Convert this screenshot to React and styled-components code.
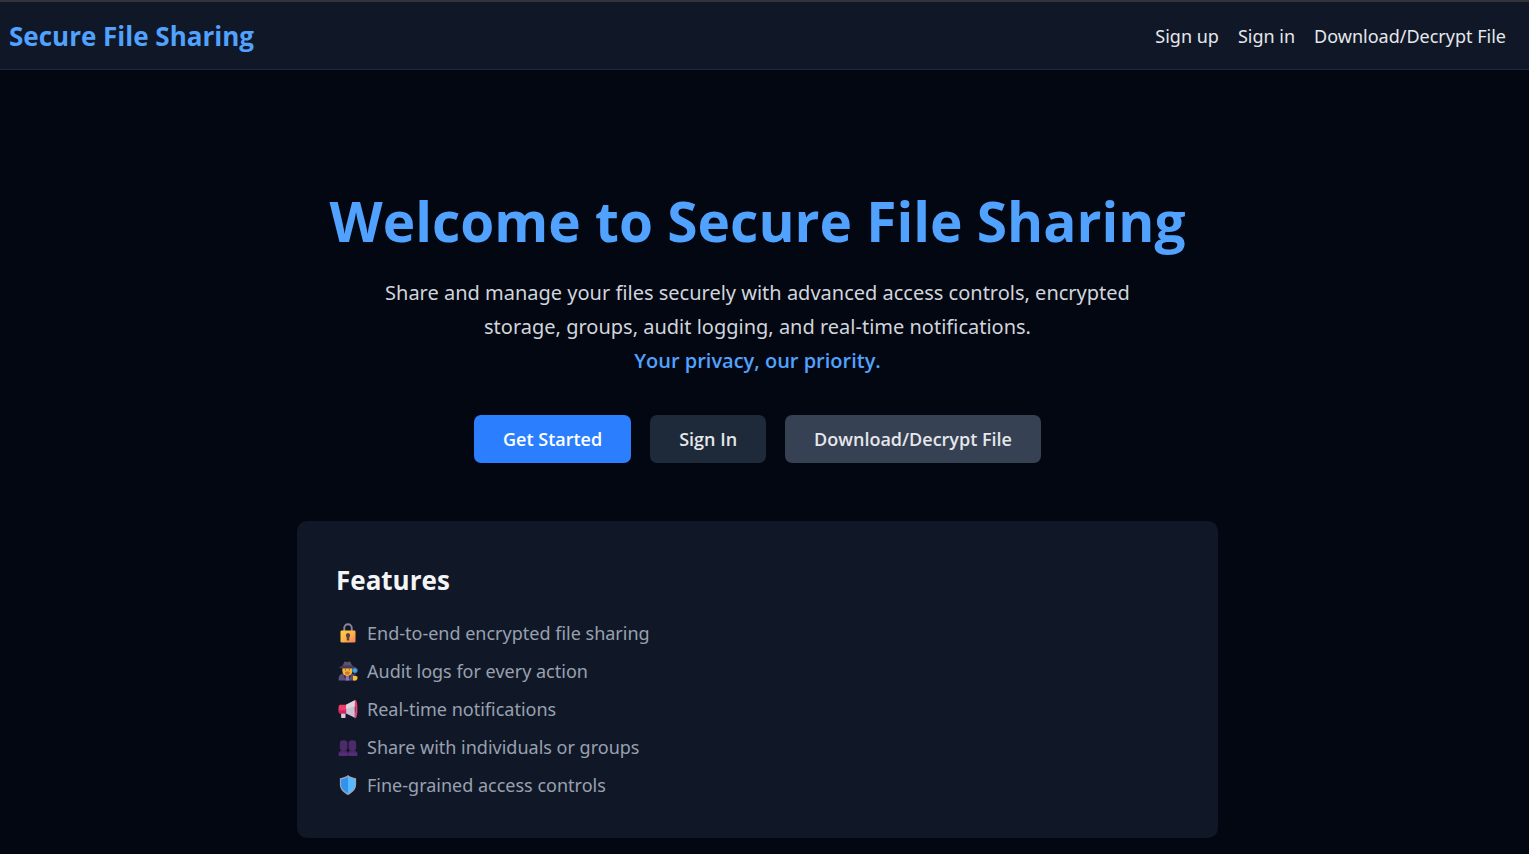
import React from "react";
import styled, { createGlobalStyle, css } from "styled-components";

const displayFont = `"Segoe UI", "Open Sans", sans-serif`;

const GlobalStyle = createGlobalStyle`
  *, *::before, *::after { box-sizing: border-box; }
  body {
    margin: 0;
    background: #030712;
    color: #f3f4f6;
    font-family: "Segoe UI", "Noto Sans", sans-serif;
    font-size: 18px;
    line-height: 28px;
  }
`;

const Header = styled.header`
  display: flex;
  align-items: center;
  justify-content: space-between;
  height: 70px;
  padding: 0 23px 0 9px;
  background: #101828;
  border-top: 2px solid #333338;
  border-bottom: 1px solid #1e2939;
`;

const Brand = styled.a`
  color: #51a2ff;
  font-family: ${displayFont};
  font-size: 26px;
  font-weight: 700;
  line-height: 40px;
  text-decoration: none;
`;

const Nav = styled.nav`
  display: flex;
  gap: 19px;
`;

const NavLink = styled.a`
  color: #e5e7eb;
  text-decoration: none;
`;

const Main = styled.main`
  display: flex;
  flex-direction: column;
  align-items: center;
  padding: 115px 14px 16px 0;
`;

const Title = styled.h1`
  margin: 0 0 19px;
  color: #51a2ff;
  font-family: ${displayFont};
  font-size: 55px;
  font-weight: 700;
  line-height: 72px;
  text-align: center;
`;

const Lead = styled.p`
  margin: 0 0 37px;
  max-width: 806px;
  color: #d1d5dc;
  font-size: 20px;
  line-height: 34px;
  text-align: center;
`;

const Accent = styled.strong`
  display: block;
  color: #51a2ff;
  font-family: ${displayFont};
  font-weight: 600;
`;

const Actions = styled.div`
  display: flex;
  gap: 19px;
  margin-bottom: 58px;
`;

const tones = {
  primary: css`background: #2b7fff; color: #ffffff;`,
  dark: css`background: #1e2939; color: #e5e7eb;`,
  muted: css`background: #364153; color: #e5e7eb;`,
};

const Button = styled.button`
  height: 48px;
  padding: 0 29px;
  border: 0;
  border-radius: 7px;
  font-family: ${displayFont};
  font-size: 18px;
  font-weight: 600;
  line-height: 28px;
  cursor: pointer;
  ${({ $tone }) => tones[$tone]}
`;

const Card = styled.section`
  width: 100%;
  max-width: 921px;
  padding: 39px;
  background: #101828;
  border-radius: 10px;
`;

const CardTitle = styled.h2`
  margin: 0 0 19px;
  font-family: ${displayFont};
  font-size: 26px;
  font-weight: 700;
  line-height: 40px;
`;

const FeatureList = styled.ul`
  display: flex;
  flex-direction: column;
  gap: 10px;
  margin: 0;
  padding: 0;
  list-style: none;
`;

const Feature = styled.li`
  display: flex;
  align-items: center;
  gap: 9px;
  padding-left: 2px;
  color: #99a1af;
`;

const Glyph = styled.svg`
  flex: none;
  width: 20px;
  height: 20px;
`;

const LockIcon = () => (
  <Glyph viewBox="0 0 32 32" aria-hidden="true">
    <defs>
      <linearGradient id="lockBody" x1="0" y1="0" x2="1" y2="1">
        <stop offset="0" stopColor="#ffd23c" />
        <stop offset="0.55" stopColor="#ffb04a" />
        <stop offset="1" stopColor="#f57c5c" />
      </linearGradient>
    </defs>
    <path d="M10 14V8a6 6 0 0 1 12 0V14" fill="none" stroke="#8d8799" strokeWidth="3" />
    <rect x="4" y="12" width="24" height="19" rx="2" fill="url(#lockBody)" />
    <path d="M16 16a4 4 0 0 0-2 7V28h4v-5A4 4 0 0 0 16 16Z" fill="#5b3d4a" />
  </Glyph>
);

const DetectiveIcon = () => (
  <Glyph viewBox="0 0 32 32" aria-hidden="true">
    <path d="M1 31v-3c0-5 4-8 9-8h10c5 0 8 3 8 8v3Z" fill="#5c5177" />
    <path d="M10 20l5 5 5-5 1 4-4 7h-4l-4-7Z" fill="#3b3153" />
    <path d="M13 23h4l1 8h-6Z" fill="#8b73b8" />
    <path d="M7 9h16v7a8 8 0 0 1-16 0Z" fill="#ffb92f" />
    <path d="M11 18c2-2 6-2 8 0l-1 4h-6Z" fill="#c87935" />
    <circle cx="12" cy="14" r="1" fill="#4b334b" />
    <circle cx="18" cy="14" r="1" fill="#4b334b" />
    <path d="M7 8 10 2c1-2 3-1 5 0 2-1 4-2 5 0l3 6Z" fill="#5b526d" />
    <path d="M7 7h16l5 3c0 2-5 2-13 2S2 12 2 10Z" fill="#463b5e" />
    <path d="M27 19v7" stroke="#4a405f" strokeWidth="2" />
    <circle cx="27" cy="15" r="4" fill="#3aa7ee" stroke="#52637e" strokeWidth="1" />
    <path d="M24 24h5c3 0 3 5 0 7h-5Z" fill="#ffbd36" />
  </Glyph>
);

const MegaphoneIcon = () => (
  <Glyph viewBox="0 0 32 32" aria-hidden="true">
    <path d="M5 20h7v9c0 2-7 2-7 0Z" fill="#d7c8dc" />
    <path d="M3 9h10v14H3c-3 0-3-14 0-14Z" fill="#ee3d68" />
    <path d="M3 18h10v5H3c-1 0-2-2-2-5Z" fill="#d42263" />
    <path d="M13 9 27 2v28l-14-7Z" fill="#c9c0d0" />
    <path d="M13 9 27 2v10l-14 4Z" fill="#ddd6e0" />
    <path d="M27 1c3 0 4 6 4 15s-1 15-4 15Z" fill="#e63f70" />
    <path d="M27 11c2 0 2 10 0 10Z" fill="#a62362" />
  </Glyph>
);

const GroupIcon = () => (
  <Glyph viewBox="0 0 32 32" aria-hidden="true">
    <defs>
      <linearGradient id="bust" x1="0" y1="0" x2="0" y2="1">
        <stop offset="0" stopColor="#41245c" />
        <stop offset="1" stopColor="#63308a" />
      </linearGradient>
    </defs>
    <path d="M1 30v-3c0-4 3-6 7-6h2c3 0 5 2 6 4 1-2 3-4 6-4h2c4 0 7 2 7 6v3Z" fill="url(#bust)" />
    <rect x="3" y="5" width="12" height="17" rx="5" fill="#4d2b6b" />
    <rect x="17" y="5" width="12" height="17" rx="5" fill="#4d2b6b" />
    <path d="M16 24v6" stroke="#351e4c" strokeWidth="1" />
  </Glyph>
);

const ShieldIcon = () => (
  <Glyph viewBox="0 0 32 32" aria-hidden="true">
    <path d="M16 0c3 3 8 4 13 5v10c0 8-6 13-13 17C9 28 3 23 3 15V5c5-1 10-2 13-5Z" fill="#9aa3bd" />
    <path d="M16 3c3 2 7 3 11 4v8c0 6-5 11-11 14Z" fill="#55bbff" />
    <path d="M16 3C13 5 9 6 5 7v8c0 6 5 11 11 14Z" fill="#2f93ee" />
  </Glyph>
);

const features = [
  { Icon: LockIcon, label: "End-to-end encrypted file sharing" },
  { Icon: DetectiveIcon, label: "Audit logs for every action" },
  { Icon: MegaphoneIcon, label: "Real-time notifications" },
  { Icon: GroupIcon, label: "Share with individuals or groups" },
  { Icon: ShieldIcon, label: "Fine-grained access controls" },
];

export default function App() {
  return (
    <>
      <GlobalStyle />
      <Header>
        <Brand href="#home">Secure File Sharing</Brand>
        <Nav>
          <NavLink href="#signup">Sign up</NavLink>
          <NavLink href="#signin">Sign in</NavLink>
          <NavLink href="#download">Download/Decrypt File</NavLink>
        </Nav>
      </Header>
      <Main>
        <Title>Welcome to Secure File Sharing</Title>
        <Lead>
          Share and manage your files securely with advanced access controls, encrypted storage,
          groups, audit logging, and real-time notifications.
          <Accent>Your privacy, our priority.</Accent>
        </Lead>
        <Actions>
          <Button type="button" $tone="primary">Get Started</Button>
          <Button type="button" $tone="dark">Sign In</Button>
          <Button type="button" $tone="muted">Download/Decrypt File</Button>
        </Actions>
        <Card>
          <CardTitle>Features</CardTitle>
          <FeatureList>
            {features.map(({ Icon, label }) => (
              <Feature key={label}>
                <Icon />
                {label}
              </Feature>
            ))}
          </FeatureList>
        </Card>
      </Main>
    </>
  );
}
